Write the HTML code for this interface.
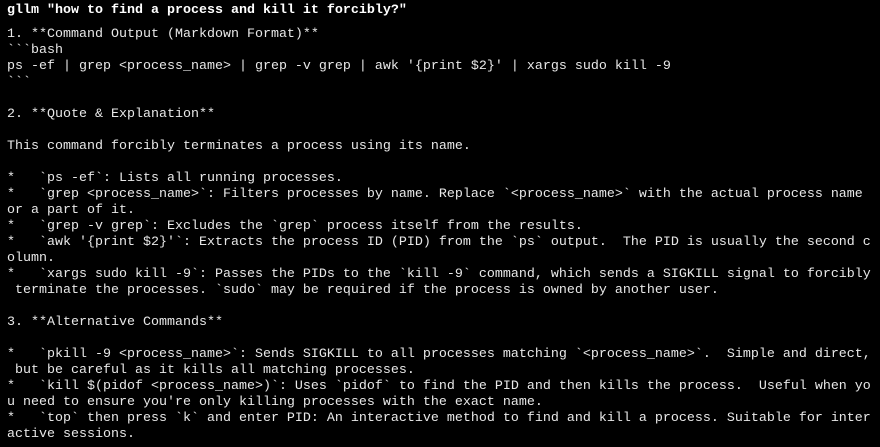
<!DOCTYPE html>
<html><head><meta charset="utf-8"><style>
html,body{margin:0;padding:0;background:#000;width:880px;height:447px;overflow:hidden}
pre{margin:0;position:absolute;left:7px;font-family:"Liberation Mono",monospace;font-size:13.33px;line-height:16px;color:#e8e8e8;white-space:pre}
#a{top:3px;font-weight:bold;color:#fff}
#b{top:27px}
</style></head><body>
<pre id="a">gllm "how to find a process and kill it forcibly?"</pre>
<pre id="b">1. **Command Output (Markdown Format)**
&#96;&#96;&#96;bash
ps -ef | grep &lt;process_name&gt; | grep -v grep | awk '{print $2}' | xargs sudo kill -9
&#96;&#96;&#96;

2. **Quote &amp; Explanation**

This command forcibly terminates a process using its name.

*   &#96;ps -ef&#96;: Lists all running processes.
*   &#96;grep &lt;process_name&gt;&#96;: Filters processes by name. Replace &#96;&lt;process_name&gt;&#96; with the actual process name
or a part of it.
*   &#96;grep -v grep&#96;: Excludes the &#96;grep&#96; process itself from the results.
*   &#96;awk '{print $2}'&#96;: Extracts the process ID (PID) from the &#96;ps&#96; output.  The PID is usually the second c
olumn.
*   &#96;xargs sudo kill -9&#96;: Passes the PIDs to the &#96;kill -9&#96; command, which sends a SIGKILL signal to forcibly
 terminate the processes. &#96;sudo&#96; may be required if the process is owned by another user.

3. **Alternative Commands**

*   &#96;pkill -9 &lt;process_name&gt;&#96;: Sends SIGKILL to all processes matching &#96;&lt;process_name&gt;&#96;.  Simple and direct,
 but be careful as it kills all matching processes.
*   &#96;kill $(pidof &lt;process_name&gt;)&#96;: Uses &#96;pidof&#96; to find the PID and then kills the process.  Useful when yo
u need to ensure you're only killing processes with the exact name.
*   &#96;top&#96; then press &#96;k&#96; and enter PID: An interactive method to find and kill a process. Suitable for inter
active sessions.</pre>
</body></html>
